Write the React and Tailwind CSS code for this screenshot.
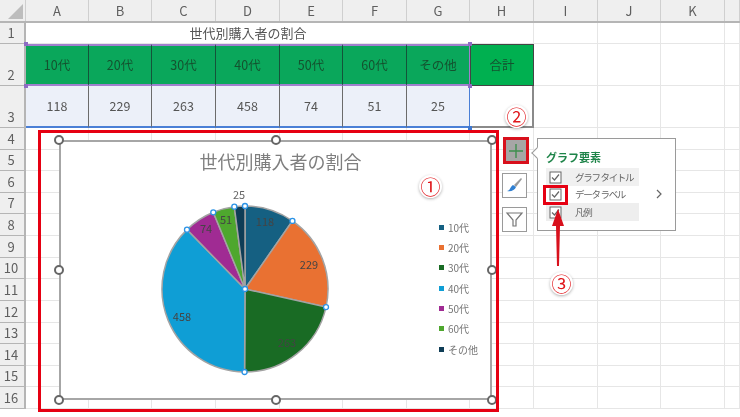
const font = "font-['Noto_Sans_CJK_JP','Liberation_Sans',sans-serif]";
const gridCols = 'grid grid-cols-[26px_63px_63px_64px_64px_63px_64px_63px_64px_64px_63px_64px_15px]';

const columns = ['A', 'B', 'C', 'D', 'E', 'F', 'G', 'H', 'I', 'J', 'K', ''];
const ages = ['10代', '20代', '30代', '40代', '50代', '60代', 'その他'];
const values = [118, 229, 263, 458, 74, 51, 25];
const rowHeights = ['h-[21.6px]', 'h-[21.6px]', 'h-[21.6px]', 'h-[21.6px]', 'h-[21.7px]', 'h-[21.6px]', 'h-[21.6px]', 'h-[21.7px]', 'h-[21.6px]', 'h-[21.6px]', 'h-[21.7px]', 'h-[21.6px]', 'h-[21.6px]'];

const sliceColors = ['#156082', '#e97132', '#196b24', '#0f9ed5', '#a02b93', '#4ea72e', '#0f3d56'];
const labels = [[206, 83], [250, 126], [228, 204], [123, 178], [147, 90], [167, 81], [180, 56]];
const total = values.reduce((a, b) => a + b, 0);
const cx = 186;
const cy = 149;
const r = 83;

const pointAt = (sum) => {
  const a = (sum / total) * Math.PI * 2;
  return [cx + r * Math.sin(a), cy - r * Math.cos(a)];
};

function RowHead({ label }) {
  return (
    <div className="flex items-end justify-center border-r-2 border-b border-[#b5b5b5] bg-[#efefef] pr-0.5 text-[13px] leading-[20px] text-[#5f5f5f]">
      {label}
    </div>
  );
}

function Blank() {
  return <div className="border-r border-b border-[#e6e6e6]" />;
}

function Pie() {
  let sum = 0;
  const slices = values.map((v, i) => {
    const start = pointAt(sum);
    sum += v;
    const end = pointAt(sum);
    const large = v / total > 0.5 ? 1 : 0;
    return { d: `M${cx} ${cy}L${start[0]} ${start[1]}A${r} ${r} 0 ${large} 1 ${end[0]} ${end[1]}Z`, end, color: sliceColors[i] };
  });
  return (
    <svg width="433" height="260" className="absolute -left-[2px] -top-[2px]">
      {slices.map((s) => (
        <path key={s.color} d={s.d} fill={s.color} stroke="#a3a3a3" strokeWidth="1.5" />
      ))}
      {values.map((v, i) => (
        <text key={v} x={labels[i][0]} y={labels[i][1]} textAnchor="middle" dominantBaseline="middle" fontSize="11" fill={i === 6 ? '#666' : '#444'}>
          {v}
        </text>
      ))}
      {slices.map((s) => (
        <circle key={s.color} cx={s.end[0]} cy={s.end[1]} r="2.5" fill="#fff" stroke="#2b93e6" strokeWidth="1.3" />
      ))}
      <circle cx={cx} cy={cy} r="2.5" fill="#fff" stroke="#2b93e6" strokeWidth="1.3" />
    </svg>
  );
}

function Handle() {
  return <div className="size-[10px] rounded-full border-2 border-[#666] bg-white" />;
}

function Check() {
  return (
    <svg width="13" height="13" viewBox="0 0 13 13" className="shrink-0">
      <rect x="1" y="1" width="11" height="11" fill="#fff" stroke="#666" />
      <path d="M3 6.5l2.5 2.5L10 3.5" fill="none" stroke="#666" strokeWidth="1.2" />
    </svg>
  );
}

function Marker({ children, className }) {
  return (
    <div className={`absolute flex size-[23px] items-center justify-center rounded-full bg-white text-[20px] leading-none text-[#e0161b] shadow-[0_1px_3px_rgba(0,0,0,0.3)] ${className}`}>
      {children}
    </div>
  );
}

function Grip({ className }) {
  return <div className={`absolute size-[4px] ${className}`} />;
}

export default function App() {
  return (
    <div className={`relative h-[417px] w-[740px] overflow-hidden bg-white blur-[0.35px] ${font}`}>
      {/* Column headers */}
      <div className={`${gridCols} h-[23px] border-b-2 border-[#b5b5b5] bg-[#efefef]`}>
        <div className="relative border-r border-[#cfcfcf]">
          <div className="absolute bottom-[2px] right-[2px] size-0 border-b-[15px] border-l-[15px] border-b-[#bdbdbd] border-l-transparent" />
        </div>
        {columns.map((c, i) => (
          <div key={i} className="flex items-center justify-center border-r border-[#cfcfcf] text-[13px] text-[#5f5f5f]">
            {c}
          </div>
        ))}
      </div>

      {/* Row 1 */}
      <div className={`${gridCols} h-[21px]`}>
        <RowHead label="1" />
        <div className="col-span-7 flex items-center justify-center border-b border-[#e6e6e6] text-[13px] text-[#555]">世代別購入者の割合</div>
        {columns.slice(7).map((c, i) => <Blank key={i} />)}
      </div>

      {/* Row 2 */}
      <div className={`${gridCols} h-[42px]`}>
        <RowHead label="2" />
        {ages.map((a, i) => (
          <div key={a} className={`flex items-center justify-center border-r border-b-2 border-t-2 border-b-[#a07fce] border-t-[#a07fce] bg-[#0aa75b] text-[12.5px] text-[#14522f] ${i === 6 ? 'border-r-[#a07fce]' : 'border-r-[#14543a]'}`}>
            {a}
          </div>
        ))}
        <div className="flex items-center justify-center border border-[#444] bg-[#00b050] text-[12.5px] text-[#14522f]">合計</div>
        {columns.slice(8).map((c, i) => <Blank key={i} />)}
      </div>

      {/* Row 3 */}
      <div className={`${gridCols} h-[42px]`}>
        <RowHead label="3" />
        {values.map((v, i) => (
          <div key={v} className={`flex items-center justify-center border-r border-b-2 border-b-[#4a7fd6] bg-[#ecf0f9] text-[12.5px] text-[#555] ${i === 6 ? 'border-r-[#4a7fd6]' : 'border-r-[#6b6b6b]'}`}>
            {v}
          </div>
        ))}
        <div className="border-r-2 border-b-2 border-[#8a8a8a]" />
        {columns.slice(8).map((c, i) => <Blank key={i} />)}
      </div>

      {/* Rows 4 - 16 */}
      {rowHeights.map((h, i) => (
        <div key={i} className={`${gridCols} ${h}`}>
          <RowHead label={i + 4} />
          {columns.map((c, j) => <Blank key={j} />)}
        </div>
      ))}

      {/* Range grips */}
      <Grip className="left-[468px] top-[42px] bg-[#8e6cc4]" />
      <Grip className="left-[468px] top-[84px] bg-[#8e6cc4]" />
      <Grip className="left-[24px] top-[42px] bg-[#8e6cc4]" />
      <Grip className="left-[24px] top-[84px] bg-[#8e6cc4]" />
      <Grip className="left-[468px] top-[126px] bg-[#3f78d0]" />

      {/* Chart object */}
      <div className="absolute left-[59px] top-[140px] flex h-[260px] w-[433px] flex-col border-2 border-[#a6a6a6] bg-white">
        <Pie />
        <div className="relative mt-[7px] pl-[10px] text-center text-[18px] leading-6 text-[#7f7f7f]">世代別購入者の割合</div>
        <div className="relative ml-[378px] mt-[46px] flex flex-col gap-[4.4px]">
          {ages.map((a, i) => (
            <div key={a} className="flex h-4 items-center gap-[4px] whitespace-nowrap text-[10px] text-[#777]">
              <svg width="5" height="5"><rect width="5" height="5" fill={sliceColors[i]} /></svg>
              {a}
            </div>
          ))}
        </div>
      </div>

      {/* Chart resize handles */}
      <div className="absolute left-[54px] top-[135px] flex h-[270px] w-[443px] flex-col justify-between">
        <div className="flex justify-between"><Handle /><Handle /><Handle /></div>
        <div className="flex justify-between"><Handle /><Handle /></div>
        <div className="flex justify-between"><Handle /><Handle /><Handle /></div>
      </div>

      {/* Red highlight around the chart */}
      <div className="absolute left-[38px] top-[130px] h-[282px] w-[461px] border-[3px] border-[#e60012]" />

      {/* Chart side buttons */}
      <div className="absolute left-[502px] top-[137px] flex flex-col gap-[9px]">
        <div className="ml-[1px] flex h-[27px] w-[26px] items-center justify-center border-[3px] border-[#d8101c] bg-[#a6a6a6]">
          <svg width="16" height="16" viewBox="0 0 16 16"><path d="M8 1v14M1 8h14" stroke="#3f8f4f" strokeWidth="1.4" /></svg>
        </div>
        <div className="flex size-[25px] items-center justify-center border border-[#9a9a9a] bg-white">
          <svg width="19" height="19" viewBox="0 0 19 19">
            <path d="M9 9l7-7 1 1-6 8z" fill="#9a9a9a" />
            <path d="M2 15c3 0 3-4 6-6l3 2c-1 3-5 5-9 4z" fill="#2f7fd1" />
          </svg>
        </div>
        <div className="flex size-[25px] items-center justify-center border border-[#9a9a9a] bg-white">
          <svg width="19" height="19" viewBox="0 0 19 19"><path d="M2 3h15l-6 7v6l-3 0v-6z" fill="none" stroke="#777" strokeWidth="1.2" /></svg>
        </div>
      </div>

      {/* Chart elements popup */}
      <div className="absolute left-[537px] top-[138px] flex h-[93px] w-[139px] items-center gap-[17px] border border-[#9a9a9a] bg-white pl-[8px]">
        <div className="absolute -left-[5px] top-[10px] size-2 rotate-45 border-b border-l border-[#9a9a9a] bg-white" />
        <div className="flex flex-col">
          <div className="text-[11px] font-bold leading-[18px] text-[#1e8449]">グラフ要素</div>
          <div className="mt-[2px] w-[93px] whitespace-pre text-[9.5px] tracking-[-1.3px] text-[#666]">
            <div className="flex h-[18px] items-center gap-[13px] bg-[#f0f0f0] pl-[3px]"><Check />グラフ タイトル</div>
            <div className="flex h-[17px] items-center gap-[13px] pl-[3px]"><Check />データ ラベル</div>
            <div className="flex h-[18px] items-center gap-[13px] bg-[#eeeeee] pl-[3px]"><Check />凡例</div>
          </div>
        </div>
        <svg width="6" height="10" viewBox="0 0 6 10" className="mt-[18px]"><path d="M1 1l4 4-4 4" fill="none" stroke="#666" strokeWidth="1.2" /></svg>
      </div>

      {/* Step annotations */}
      <div className="absolute left-[543px] top-[185px] h-[20px] w-[25px] border-[3px] border-[#e60012]" />
      <svg width="16" height="62" viewBox="0 0 16 62" className="absolute left-[550px] top-[206px]">
        <path d="M8 3L2 20h4L7 60h2l1-40h4z" fill="#d8101c" />
      </svg>
      <Marker className="left-[419px] top-[175px]">①</Marker>
      <Marker className="left-[505px] top-[105px]">②</Marker>
      <Marker className="left-[550px] top-[272px]">③</Marker>
    </div>
  );
}
